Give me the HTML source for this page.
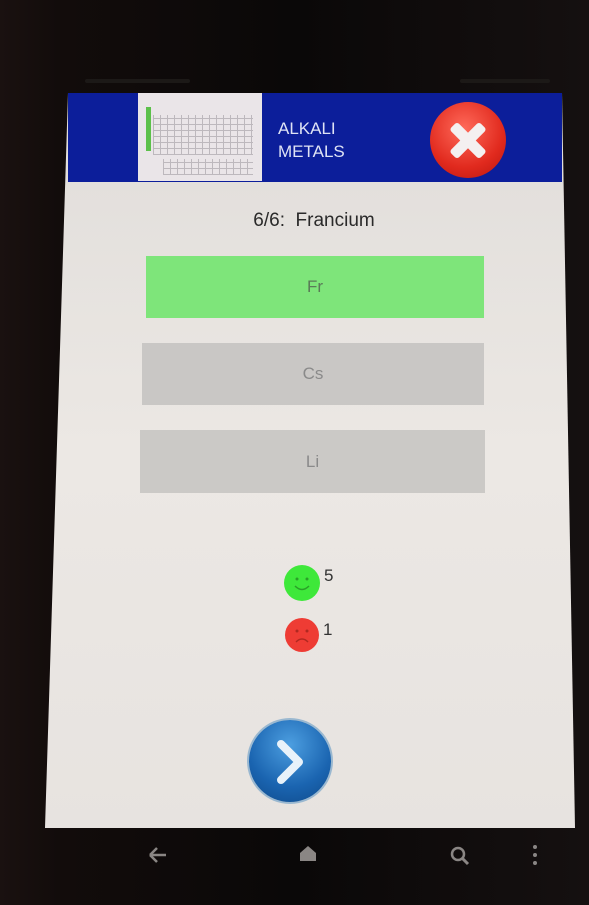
<!DOCTYPE html>
<html><head><style>
body{margin:0;width:589px;height:905px;background:#0b0706;position:relative;overflow:hidden;font-family:"Liberation Sans",sans-serif}
.frame{position:absolute;left:0;top:0;width:589px;height:905px;background:linear-gradient(90deg,#1a1110 0%,#120c0b 10%,#0a0808 50%,#151010 100%)}
.screen{position:absolute;left:0;top:0;width:589px;height:905px;background:linear-gradient(180deg,#dddad7 0%,#ece8e4 50%,#e6e2df 100%);clip-path:polygon(68px 93px,562px 93px,575px 828px,45px 828px)}
.a{position:absolute}
.btn{position:absolute;text-align:center;color:#8a8a8a;font-size:17px}
</style></head><body>
<div class="frame"></div>
<div class="a" style="left:85px;top:79px;width:105px;height:4px;background:#1c1917;border-radius:2px"></div>
<div class="a" style="left:460px;top:79px;width:90px;height:4px;background:#1c1917;border-radius:2px"></div>
<div class="screen"></div>
<div class="a" style="left:68px;top:93px;width:494px;height:89px;background:#0c1e9a"></div>
<div class="a" style="left:138px;top:93px;width:124px;height:88px;background:#eae5e8">
 <div class="a" style="left:8px;top:14px;width:5px;height:44px;background:#5cc04a"></div>
 <div class="a" style="left:15px;top:22px;width:100px;height:40px;background:repeating-linear-gradient(90deg,#bdb8bd 0 1px,transparent 1px 7px),repeating-linear-gradient(0deg,#bdb8bd 0 1px,transparent 1px 6px)"></div>
 <div class="a" style="left:25px;top:66px;width:90px;height:16px;background:repeating-linear-gradient(90deg,#bdb8bd 0 1px,transparent 1px 7px),repeating-linear-gradient(0deg,#bdb8bd 0 1px,transparent 1px 6px)"></div>
</div>
<div class="a" style="left:278px;top:117px;color:#dfe3f5;font-size:17px;line-height:23px">ALKALI<br>METALS</div>
<div class="a" style="left:430px;top:102px;width:76px;height:76px;border-radius:50%;background:radial-gradient(circle at 45% 35%,#ff6a5a,#e12a1e 60%,#b8150e)"></div>
<div class="a" style="left:447px;top:135px;width:42px;height:11px;background:#f4f0f0;transform:rotate(45deg);border-radius:3px"></div>
<div class="a" style="left:447px;top:135px;width:42px;height:11px;background:#f4f0f0;transform:rotate(-45deg);border-radius:3px"></div>
<div class="a" style="left:0;width:628px;top:210px;text-align:center;font-size:19px;color:#2a2a2a">6/6:&nbsp;&nbsp;Francium</div>
<div class="btn" style="left:146px;top:256px;width:338px;height:62px;line-height:62px;background:#7ee57a;color:#5a7a58">Fr</div>
<div class="btn" style="left:142px;top:343px;width:342px;height:62px;line-height:62px;background:#c9c7c5">Cs</div>
<div class="btn" style="left:140px;top:430px;width:345px;height:63px;line-height:63px;background:#cbc9c6">Li</div>
<svg class="a" style="left:284px;top:565px" width="36" height="36"><circle cx="18" cy="18" r="18" fill="#3ee83a"/><circle cx="13" cy="14" r="1.5" fill="#2aa028"/><circle cx="23" cy="14" r="1.5" fill="#2aa028"/><path d="M11 21 Q18 28 25 21" stroke="#2aa028" stroke-width="1.5" fill="none"/></svg>
<div class="a" style="left:324px;top:566px;font-size:17px;color:#333">5</div>
<svg class="a" style="left:285px;top:618px" width="34" height="34"><circle cx="17" cy="17" r="17" fill="#ee3c34"/><circle cx="12" cy="13" r="1.5" fill="#b02820"/><circle cx="22" cy="13" r="1.5" fill="#b02820"/><path d="M11 24 Q17 18 23 24" stroke="#b02820" stroke-width="1.5" fill="none"/></svg>
<div class="a" style="left:323px;top:620px;font-size:17px;color:#333">1</div>
<div class="a" style="left:249px;top:720px;width:82px;height:82px;border-radius:50%;background:radial-gradient(circle at 50% 30%,#4c9ee0,#1a64b0 60%,#0f4a8a);box-shadow:0 0 0 2px #9ab8d0"></div>
<svg class="a" style="left:249px;top:720px" width="82" height="82"><path d="M32 24 L50 42 L32 60" fill="none" stroke="#e8f2fa" stroke-width="8" stroke-linecap="round" stroke-linejoin="round"/></svg>
<svg class="a" style="left:0;top:835px" width="589" height="45">
<path d="M150 20 H166 M150 20 L157 13 M150 20 L157 27" stroke="#8a8684" stroke-width="2.5" fill="none"/>
<path d="M300 26 V18 L308 11 L316 18 V26 Z" fill="#8a8684"/>
<circle cx="458" cy="19" r="6" stroke="#8a8684" stroke-width="2.5" fill="none"/><path d="M462 23 L468 29" stroke="#8a8684" stroke-width="3"/>
<circle cx="535" cy="12" r="2" fill="#8a8684"/><circle cx="535" cy="20" r="2" fill="#8a8684"/><circle cx="535" cy="28" r="2" fill="#8a8684"/>
</svg>
</body></html>
